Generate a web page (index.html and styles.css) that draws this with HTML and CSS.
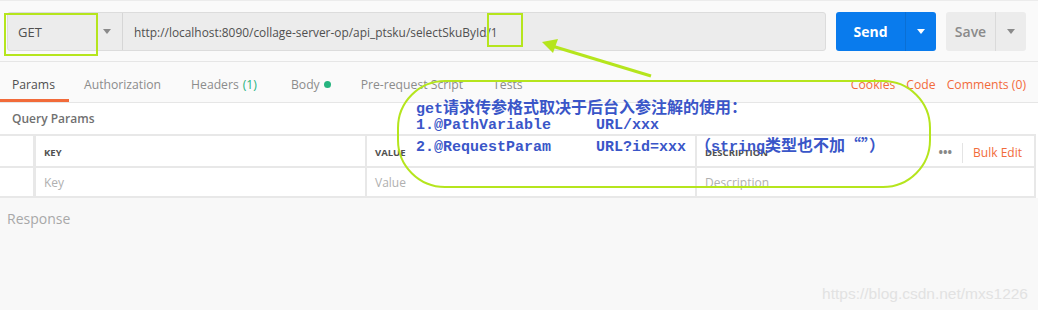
FILE: index.html
```html
<!DOCTYPE html>
<html>
<head>
<meta charset="utf-8">
<link rel="stylesheet" href="styles.css">
</head>
<body>
<div class="page">
  <div class="topbar">
    <div class="urlgroup">
      <div class="method"><span>GET</span><span class="caret"></span></div>
      <div class="url">http://localhost:8090/collage-server-op/api_ptsku/selectSkuById/1</div>
    </div>
    <div class="send"><span class="send-label">Send</span><span class="send-drop"><span class="caret white"></span></span></div>
    <div class="save"><span class="save-label">Save</span><span class="save-drop"><span class="caret"></span></span></div>
  </div>
  <div class="tabs">
    <div class="tab active">Params</div>
    <div class="tab">Authorization</div>
    <div class="tab">Headers <span class="green">(1)</span></div>
    <div class="tab">Body <span class="dot"></span></div>
    <div class="tab">Pre-request Script</div>
    <div class="tab">Tests</div>
    <div class="tab-links">
      <span>Cookies</span><span>Code</span><span>Comments (0)</span>
    </div>
  </div>
  <div class="query-title">Query Params</div>
  <div class="table">
    <div class="row head">
      <div class="cell first"></div>
      <div class="cell">KEY</div>
      <div class="cell">VALUE</div>
      <div class="cell desc">DESCRIPTION<span class="desc-tools"><span class="dots">•••</span><span class="sep"></span><span class="bulk">Bulk Edit</span></span></div>
    </div>
    <div class="row body">
      <div class="cell first"></div>
      <div class="cell ph">Key</div>
      <div class="cell ph">Value</div>
      <div class="cell ph desc">Description</div>
    </div>
  </div>
  <div class="response">
    <div class="response-title">Response</div>
    <div class="watermark">https://blog.csdn.net/mxs1226</div>
  </div>

  <div class="mark mark-get"></div>
  <div class="mark mark-id"></div>
  <svg class="arrow" width="1038" height="310" viewBox="0 0 1038 310">
    <line x1="651" y1="76" x2="552" y2="46" stroke="#b5e51d" stroke-width="3"/>
    <polygon points="542,42 558,39 553,53" fill="#b5e51d"/>
  </svg>
  <div class="note">
    <div class="line">get<span class="cjk">请求传参格式取决于后台入参注解的使用：</span></div>
    <div class="line">1.@PathVariable     URL/xxx</div>
    <div class="line">2.@RequestParam     URL?id=xxx <span class="cjk">（</span>string<span class="cjk">类型也不加“”）</span></div>
  </div>
</div>
</body>
</html>
```
FILE: styles.css
```css
* { box-sizing: border-box; }
html, body { margin: 0; padding: 0; }
body {
  width: 1038px;
  height: 310px;
  overflow: hidden;
  background: #fff;
  font-family: "Open Sans", "Noto Sans", sans-serif;
}
.page { position: relative; width: 1038px; height: 310px; }

.topbar {
  display: flex;
  align-items: stretch;
  height: 62px;
  padding: 11px 12px 11px 7px;
  background: #fafafa;
  border-top: 1px solid #ececec;
  border-bottom: 1px solid #e6e6e6;
}
.urlgroup {
  display: flex;
  width: 819px;
  height: 39px;
  background: #ececec;
  border: 1px solid #dcdcdc;
  border-radius: 3px;
}
.method {
  width: 115px;
  display: flex;
  align-items: center;
  justify-content: space-between;
  padding: 0 11px 0 10px;
  border-right: 1px solid #d6d6d6;
  font-size: 13px;
  color: #505050;
}
.caret {
  display: inline-block;
  width: 0; height: 0;
  border-left: 4px solid transparent;
  border-right: 4px solid transparent;
  border-top: 5px solid #8a8a8a;
}
.caret.white { border-top-color: #fff; }
.url {
  display: flex;
  align-items: center;
  padding-left: 11px;
  font-size: 11.9px;
  color: #505050;
  white-space: nowrap;
}
.send {
  display: flex;
  margin-left: 10px;
  width: 100px;
  height: 39px;
  background: #097bed;
  border-radius: 3px;
  color: #fff;
  font-weight: 700;
  font-size: 14px;
}
.send-label { width: 69px; display: flex; align-items: center; justify-content: center; }
.send-drop { flex: 1; display: flex; align-items: center; justify-content: center; border-left: 1px solid #0a6fd4; }
.save {
  display: flex;
  margin-left: 10px;
  width: 80px;
  height: 39px;
  background: #ececec;
  border-radius: 3px;
  color: #8a8a8a;
  font-weight: 600;
  font-size: 14px;
}
.save-label { width: 49px; display: flex; align-items: center; justify-content: center; }
.save-drop { flex: 1; display: flex; align-items: center; justify-content: center; border-left: 1px solid #dadada; }

.tabs {
  display: flex;
  align-items: stretch;
  height: 41px;
  background: #fafafa;
  border-bottom: 1px solid #e6e6e6;
  font-size: 12.2px;
  color: #8c8c8c;
}
.tab {
  display: flex;
  align-items: center;
  padding: 8px 12px 0;
  margin-right: 6px;
  border-bottom: 3px solid transparent;
  white-space: nowrap;
}
.tab:nth-child(3) { margin-right: 10px; }
.tab:nth-child(4) { margin-right: 6px; }
.tab.active { color: #505050; border-bottom-color: #f26b3a; padding: 8px 14px 0 12px; margin-right: 3px; }
.green { color: #26b47f; margin-left: 4px; }
.dot { display: inline-block; width: 7px; height: 7px; border-radius: 50%; background: #26b47f; margin-left: 4px; }
.tab-links {
  margin-left: auto;
  display: flex;
  align-items: center;
  gap: 11px;
  padding: 5px 12px 0 0;
  color: #f26b3a;
}

.query-title {
  height: 31px;
  display: flex;
  align-items: center;
  padding-left: 12px;
  font-size: 12px;
  font-weight: 600;
  color: #707070;
  background: #fff;
}
.table { background: #fff; width: 1036px; border-top: 2px solid #e8e8e8; border-right: 2px solid #e8e8e8; }
.row {
  display: grid;
  grid-template-columns: 36px 331px 330px 1fr;
  border-bottom: 2px solid #e8e8e8;
}
.row.head { height: 32px; }
.row.body { height: 30px; }
.cell {
  display: flex;
  align-items: center;
  padding-left: 8px;
  border-right: 2px solid #e8e8e8;
  font-size: 9.5px;
  font-weight: 700;
  color: #505050;
}
.cell:last-child { border-right: none; }
.cell.first { border-right: 3px solid #e8e8e8; padding: 0; }
.row.head .cell { padding-top: 3px; }
.cell.ph { font-weight: 400; font-size: 12px; color: #b0b0b0; }
.desc-tools { margin-left: auto; display: flex; align-items: center; }
.dots { color: #888; font-size: 12px; letter-spacing: 0; }
.sep { width: 1px; height: 20px; background: #e4e4e4; margin: 0 10px 0 10px; }
.bulk { font-size: 12px; font-weight: 400; color: #f26b3a; margin-right: 12px; }

.response {
  height: 113px;
  background: #f8f8f8;
  position: relative;
}
.response-title {
  padding: 11px 0 0 7px;
  font-size: 14px;
  color: #a8a8a8;
}
.watermark {
  position: absolute;
  right: 10px;
  bottom: 8px;
  font-family: "Liberation Sans", sans-serif;
  font-size: 15.5px;
  color: #e2e2e2;
}

.mark { position: absolute; border: 2px solid #b5e51d; }
.mark-get { left: 4px; top: 13px; width: 94px; height: 43px; }
.mark-id { left: 487px; top: 13px; width: 36px; height: 34px; }
.arrow { position: absolute; left: 0; top: 0; pointer-events: none; }
.note {
  position: absolute;
  left: 397px;
  top: 80px;
  width: 534px;
  height: 108px;
  border: 2px solid #b5e51d;
  border-radius: 48px;
  padding: 15px 0 0 17px;
  font-family: "Liberation Mono", "Noto Sans CJK SC", monospace;
  font-size: 15px;
  font-weight: 700;
  line-height: 19px;
  color: #3a56c8;
}
.note .line { white-space: pre; height: 19px; line-height: 19px; }
.note .cjk { font-family: "Noto Sans CJK SC", sans-serif; font-size: 16px; font-weight: 700; line-height: 19px; }
```
